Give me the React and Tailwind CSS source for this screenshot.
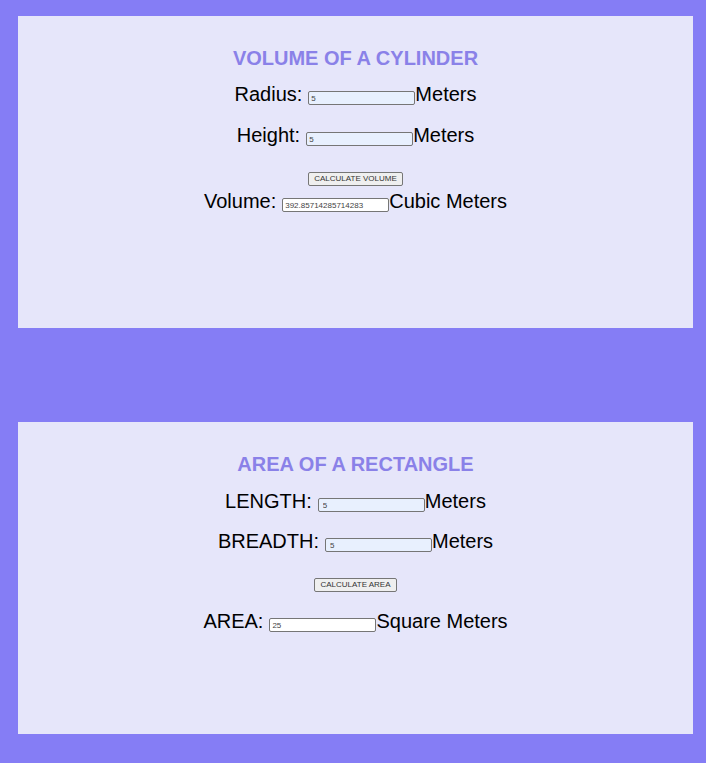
import { useState } from "react";

const field =
  "h-[14px] w-[107px] shrink-0 rounded-[2px] border border-[#767676] text-[8px] leading-[12px] text-[#444444]";

function Row({ id, label, unit, value, onChange, className = "", inset = "px-[2px]" }) {
  return (
    <div className={`flex items-center justify-center text-[20px] leading-[24px] ${className}`}>
      <label htmlFor={id} className="mr-[6px]">{label}</label>
      <input
        id={id}
        type="text"
        value={value}
        readOnly={!onChange}
        onChange={onChange && ((e) => onChange(e.target.value))}
        className={`${field} ${inset} mt-[8px] ${onChange ? "bg-[#e8f0fe]" : "bg-white"}`}
      />
      <span>{unit}</span>
    </div>
  );
}

function Panel({ title, children }) {
  return (
    <section className="min-h-[312px] bg-[#e6e6fa] pt-[30px]">
      <h2 className="text-center text-[20px] leading-[24px] font-bold text-[#8a81e8]">{title}</h2>
      {children}
    </section>
  );
}

function Action({ children, onClick, className = "" }) {
  return (
    <div className={`flex justify-center ${className}`}>
      <button
        type="button"
        onClick={onClick}
        className="h-[14px] rounded-[2px] border border-[#767676] bg-[#efefef] px-[5px] text-[8px] leading-[12px] text-[#333333]"
      >
        {children}
      </button>
    </div>
  );
}

export default function App() {
  const [radius, setRadius] = useState("5");
  const [height, setHeight] = useState("5");
  const [volume, setVolume] = useState("392.85714285714283");
  const [length, setLength] = useState("5");
  const [breadth, setBreadth] = useState("5");
  const [area, setArea] = useState("25");

  return (
    <main className="flex min-h-screen flex-col gap-[94px] bg-[#857df5] pt-[16px] pr-[13px] pb-[28px] pl-[18px] font-['Liberation_Sans',Arial,sans-serif] text-black">
      <Panel title="VOLUME OF A CYLINDER">
        <Row id="radius" label="Radius:" unit="Meters" value={radius} onChange={setRadius} className="mt-[12px]" />
        <Row id="height" label="Height:" unit="Meters" value={height} onChange={setHeight} className="mt-[17px]" />
        <Action className="mt-[25px]" onClick={() => setVolume(String((22 / 7) * radius * radius * height))}>
          CALCULATE VOLUME
        </Action>
        <Row id="volume" label="Volume:" unit="Cubic Meters" value={volume} className="mt-[3px]" />
      </Panel>
      <Panel title="AREA OF A RECTANGLE">
        <Row id="length" label="LENGTH:" unit="Meters" value={length} onChange={setLength} className="mt-[13px]" inset="px-[4px]" />
        <Row id="breadth" label="BREADTH:" unit="Meters" value={breadth} onChange={setBreadth} className="mt-[16px]" inset="px-[4px]" />
        <Action className="mt-[25px]" onClick={() => setArea(String(length * breadth))}>
          CALCULATE AREA
        </Action>
        <Row id="area" label="AREA:" unit="Square Meters" value={area} className="mt-[17px]" />
      </Panel>
    </main>
  );
}
